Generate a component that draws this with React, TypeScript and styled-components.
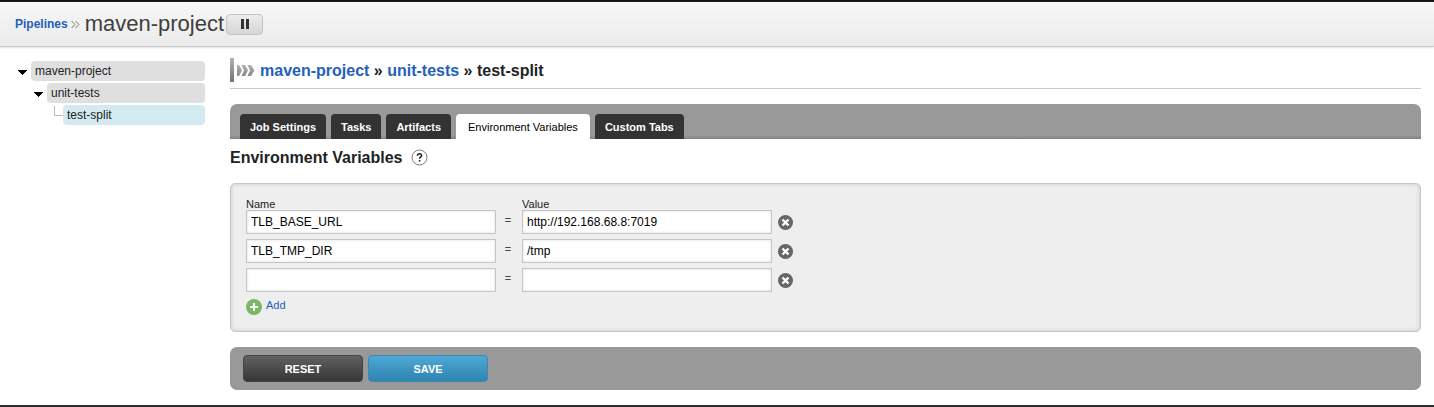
import React, { useState } from "react";
import styled, { createGlobalStyle } from "styled-components";

const GlobalStyle = createGlobalStyle`
  *, *::before, *::after { box-sizing: border-box; }
  body {
    margin: 0;
    background: #fff;
    color: #222;
    font-family: "Liberation Sans", Arial, Helvetica, sans-serif;
    font-size: 12px;
  }
`;

const Page = styled.div`
  border-top: 2px solid #111;
  border-bottom: 2px solid #2c2a2b;
`;

const Header = styled.header`
  display: flex;
  align-items: center;
  height: 45px;
  padding-left: 15px;
  background: linear-gradient(#f7f7f7, #ebebeb);
  border-bottom: 1px solid #c8c8c8;
  box-shadow: 0 1px 2px #e4e4e4;
`;

const PipelinesLink = styled.a`
  color: #2560bb;
  font-weight: bold;
  text-decoration: none;
`;

const HeaderSeparator = styled.svg`
  margin: 0 5px 0 3px;
`;

const PipelineName = styled.h1`
  margin: 0 2px 0 0;
  color: #3e3e3c;
  font-size: 22px;
  line-height: 26px;
  font-weight: normal;
`;

const PauseButton = styled.button`
  display: flex;
  align-items: center;
  justify-content: center;
  width: 37px;
  height: 21px;
  padding: 0;
  border: 1px solid #c4c4c4;
  border-radius: 4px;
  background: linear-gradient(#ececec, #d6d6d6);
`;

const Content = styled.div`
  display: flex;
  align-items: flex-start;
  gap: 25px;
  padding: 11px 13px 15px 15px;
`;

const Tree = styled.nav`
  flex: 0 0 190px;
  display: flex;
  flex-direction: column;
  gap: 2px;
  padding-top: 3px;
`;

const TreeRow = styled.div<{ $level: number }>`
  display: flex;
  height: 20px;
  padding-left: ${(p) => p.$level * 16}px;
`;

const TreeMark = styled.svg`
  flex: none;
`;

const TreeLink = styled.a<{ $current?: boolean }>`
  flex: 1;
  padding-left: 4px;
  border-radius: 4px;
  background: ${(p) => (p.$current ? "#d3eaf0" : "#dfdfdf")};
  color: #222;
  line-height: 20px;
  text-decoration: none;
`;

const Main = styled.main`
  flex: 1;
  min-width: 0;
`;

const Breadcrumb = styled.h2`
  display: flex;
  align-items: center;
  gap: 5px;
  height: 31px;
  margin: 0 0 15px;
  padding-bottom: 6px;
  border-bottom: 1px solid #c8c8c8;
  font-size: 16px;
  line-height: 24px;
`;

const BreadcrumbPath = styled.span`
  padding-top: 2px;
`;

const BreadcrumbLink = styled.a`
  color: #2560bb;
  text-decoration: none;
`;

const TabBar = styled.div`
  display: flex;
  gap: 5px;
  padding: 10px 10px 0;
  border-radius: 7px 7px 0 0;
  background: linear-gradient(#999 90%, #808080);
`;

const Tab = styled.button<{ $active: boolean }>`
  height: 25px;
  padding: 0 ${(p) => (p.$active ? 12 : 10)}px;
  border: 0;
  border-radius: 4px 4px 0 0;
  background: ${(p) => (p.$active ? "#fff" : "#333")};
  color: ${(p) => (p.$active ? "#000" : "#fff")};
  font: ${(p) => (p.$active ? "normal" : "bold")} 11px "Liberation Sans", Arial, sans-serif;
`;

const SectionTitle = styled.h3`
  display: flex;
  align-items: center;
  gap: 8px;
  margin: 8px 0 15px;
  font-size: 16px;
  line-height: 21px;
`;

const HelpButton = styled.button`
  display: flex;
  padding: 0;
  border: 0;
  background: none;
`;

const Fieldset = styled.div`
  padding: 14px 15px 16px;
  border: 1px solid #c6c6c6;
  border-radius: 5px;
  background: #eee;
  box-shadow: inset 0 0 4px #c8c8c8;
`;

const VariableGrid = styled.div`
  display: grid;
  grid-template-columns: 250px 26px 250px 27px;
  row-gap: 5px;
  align-items: center;
`;

const LabelRow = styled.div`
  display: grid;
  grid-template-columns: 250px 26px 250px;
  height: 12px;
  font-size: 11px;
  line-height: 12px;
`;

const ValueLabel = styled.label`
  grid-column: 3;
`;

const TextInput = styled.input`
  width: 100%;
  height: 24px;
  padding: 0 4px;
  border: 1px solid #c6c6c6;
  border-radius: 0;
  background: #fff;
  box-shadow: inset 0 0 3px #ddd;
  color: #000;
  font: 12px "Liberation Sans", Arial, sans-serif;
`;

const Equals = styled.span`
  color: #444;
  font-size: 11px;
  line-height: 20px;
  padding: 0 2px 4px 0;
  text-align: center;
`;

const RemoveButton = styled.button`
  display: flex;
  margin-left: 6px;
  padding: 0;
  border: 0;
  background: none;
`;

const AddButton = styled.button`
  display: flex;
  gap: 4px;
  margin-top: 7px;
  padding: 0;
  border: 0;
  background: none;
  color: #2560bb;
  font: 11px/13px "Liberation Sans", Arial, sans-serif;
`;

const Actions = styled.div`
  display: flex;
  gap: 5px;
  margin-top: 15px;
  padding: 8px 13px;
  border-radius: 7px;
  background: #999;
`;

const ActionButton = styled.button<{ $primary?: boolean }>`
  width: 120px;
  height: 27px;
  padding: 0;
  border: 1px solid ${(p) => (p.$primary ? "#3a88b2" : "#444")};
  border-radius: 4px;
  background: ${(p) =>
    p.$primary ? "linear-gradient(#4fa8d6, #2f84b0)" : "linear-gradient(#616161, #373737)"};
  color: #fff;
  font: bold 11px "Liberation Sans", Arial, sans-serif;
`;

const OpenMark = () => (
  <TreeMark width="16" height="20" aria-hidden="true">
    <path d="M3 9h9v1h-1v1h-1v1h-1v1h-1v1H7v-1H6v-1H5v-1H4v-1H3z" fill="#000" />
  </TreeMark>
);

const BranchMark = () => (
  <TreeMark width="16" height="20" aria-hidden="true">
    <path d="M7.500 1v9.500H16" fill="none" stroke="#bbb" />
  </TreeMark>
);

const JobMark = () => (
  <svg width="25" height="24" viewBox="0 0 25 24" aria-hidden="true">
    <defs>
      <linearGradient id="bar" x1="0" y1="0" x2="0" y2="1">
        <stop offset="0" stopColor="#b2b2b2" />
        <stop offset="1" stopColor="#747474" />
      </linearGradient>
      <linearGradient id="arrows" x1="0" y1="0" x2="0" y2="1">
        <stop offset="0" stopColor="#b0b0b0" />
        <stop offset="1" stopColor="#8a8a8a" />
      </linearGradient>
    </defs>
    <path d="M0 0h4v24H0z" fill="url(#bar)" />
    <path
      d="M7 7h2l3 5.500L9 18H7zM11.500 7h3.500l3 5.500-3 5.500h-3.500l2.500-5.500zM17.500 7H21l3.500 5.500L21 18h-3.500l2.500-5.500z"
      fill="url(#arrows)"
    />
  </svg>
);

const tabs = ["Job Settings", "Tasks", "Artifacts", "Environment Variables", "Custom Tabs"];

export default function App() {
  const [active, setActive] = useState("Environment Variables");
  const [rows, setRows] = useState([
    { id: 1, name: "TLB_BASE_URL", value: "http://192.168.68.8:7019" },
    { id: 2, name: "TLB_TMP_DIR", value: "/tmp" },
    { id: 3, name: "", value: "" },
  ]);

  return (
    <Page>
      <GlobalStyle />
      <Header>
        <PipelinesLink href="#pipelines">Pipelines</PipelinesLink>
        <HeaderSeparator width="9" height="9" aria-hidden="true">
          <path d="M.5 1 4 4.500 .5 8M4.500 1 8 4.500 4.500 8" fill="none" stroke="#777" />
        </HeaderSeparator>
        <PipelineName>maven-project</PipelineName>
        <PauseButton type="button" aria-label="Pause">
          <svg width="8" height="10" aria-hidden="true">
            <path d="M0 0h3v10H0zM5 0h3v10H5z" fill="#333" />
          </svg>
        </PauseButton>
      </Header>
      <Content>
        <Tree aria-label="Configuration">
          <TreeRow $level={0}>
            <OpenMark />
            <TreeLink href="#maven-project">maven-project</TreeLink>
          </TreeRow>
          <TreeRow $level={1}>
            <OpenMark />
            <TreeLink href="#unit-tests">unit-tests</TreeLink>
          </TreeRow>
          <TreeRow $level={2}>
            <BranchMark />
            <TreeLink href="#test-split" $current>test-split</TreeLink>
          </TreeRow>
        </Tree>
        <Main>
          <Breadcrumb>
            <JobMark />
            <BreadcrumbPath>
              <BreadcrumbLink href="#maven-project">maven-project</BreadcrumbLink>
              {" » "}
              <BreadcrumbLink href="#unit-tests">unit-tests</BreadcrumbLink>
              {" » test-split"}
            </BreadcrumbPath>
          </Breadcrumb>
          <TabBar role="tablist">
            {tabs.map((tab) => (
              <Tab
                key={tab}
                type="button"
                role="tab"
                aria-selected={tab === active}
                $active={tab === active}
                onClick={() => setActive(tab)}
              >
                {tab}
              </Tab>
            ))}
          </TabBar>
          <SectionTitle>
            Environment Variables
            <HelpButton type="button" aria-label="Help">
              <svg width="17" height="17" aria-hidden="true">
                <circle cx="8.500" cy="8.500" r="7.500" fill="#fff" stroke="#777" />
                <path
                  d="M6.400 6.700Q6.500 4.700 8.500 4.700T10.600 6.500C10.600 8 8.600 8 8.600 9.800M8.600 10.900v1.700"
                  fill="none"
                  stroke="#222"
                  strokeWidth="1.600"
                />
              </svg>
            </HelpButton>
          </SectionTitle>
          <Fieldset>
            <LabelRow>
              <label htmlFor="name-1">Name</label>
              <ValueLabel htmlFor="value-1">Value</ValueLabel>
            </LabelRow>
            <VariableGrid>
              {rows.map((row) => (
                <React.Fragment key={row.id}>
                  <TextInput id={`name-${row.id}`} aria-label="Name" type="text" defaultValue={row.name} />
                  <Equals>=</Equals>
                  <TextInput id={`value-${row.id}`} aria-label="Value" type="text" defaultValue={row.value} />
                  <RemoveButton
                    type="button"
                    aria-label="Remove variable"
                    onClick={() => setRows(rows.filter((r) => r.id !== row.id))}
                  >
                    <svg width="15" height="15" aria-hidden="true">
                      <circle cx="7.500" cy="7.500" r="7.500" fill="#666" />
                      <path d="M4.500 4.500l6 6M10.500 4.500l-6 6" stroke="#fff" strokeWidth="2.400" />
                    </svg>
                  </RemoveButton>
                </React.Fragment>
              ))}
            </VariableGrid>
            <AddButton
              type="button"
              onClick={() => setRows([...rows, { id: Date.now(), name: "", value: "" }])}
            >
              <svg width="16" height="16" aria-hidden="true">
                <circle cx="8" cy="8" r="8" fill="#7ab866" />
                <path d="M8 4v8M4 8h8" stroke="#fff" strokeWidth="2" />
              </svg>
              Add
            </AddButton>
          </Fieldset>
          <Actions>
            <ActionButton type="reset">RESET</ActionButton>
            <ActionButton type="submit" $primary>SAVE</ActionButton>
          </Actions>
        </Main>
      </Content>
    </Page>
  );
}
